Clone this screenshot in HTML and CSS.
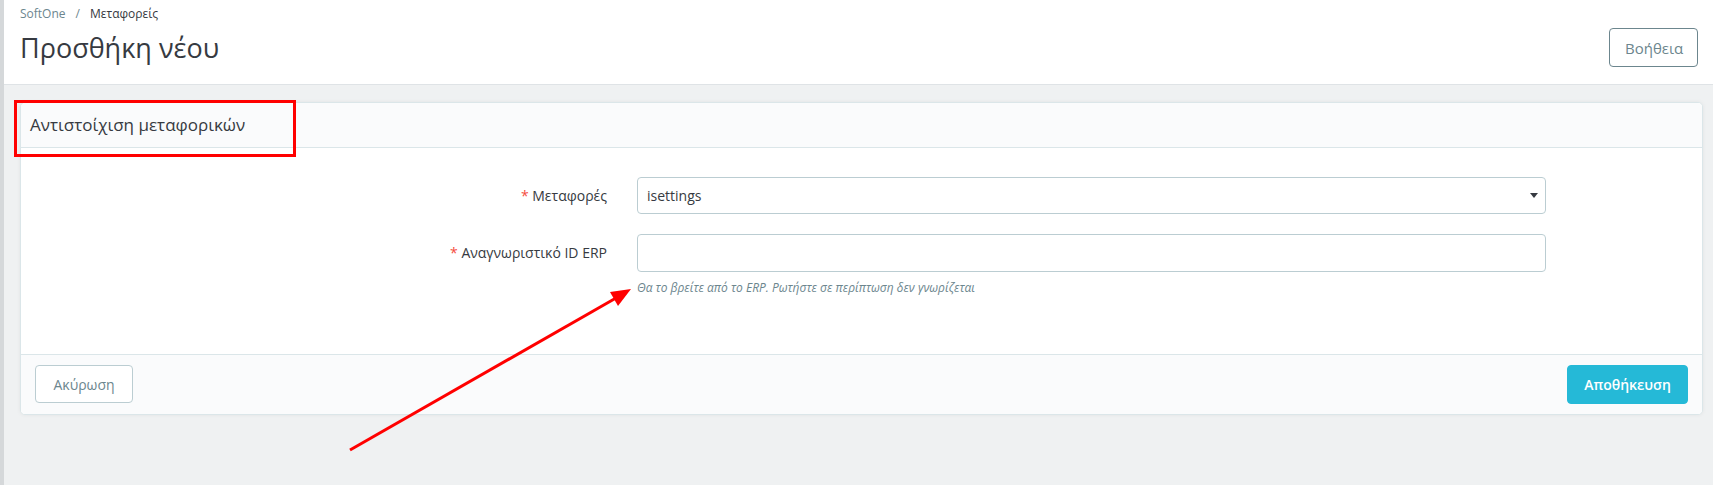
FILE: index.html
```html
<!DOCTYPE html>
<html lang="el">
<head>
<meta charset="utf-8">
<title>Προσθήκη νέου</title>
<link rel="stylesheet" href="styles.css">
</head>
<body>
<div class="layout">
  <div class="side-strip"></div>
  <div class="main">
    <header class="page-head">
      <div class="head-left">
        <nav class="crumbs"><span class="crumb-root">SoftOne</span><span class="crumb-sep">/</span><span class="crumb-cur">Μεταφορείς</span></nav>
        <h1 class="page-title">Προσθήκη νέου</h1>
      </div>
      <button class="btn btn-outline">Βοήθεια</button>
    </header>
    <div class="content">
      <div class="card">
        <div class="card-header">Αντιστοίχιση μεταφορικών</div>
        <div class="card-body">
          <div class="form-row">
            <label class="form-label"><span class="req">*</span> Μεταφορές</label>
            <div class="field">
              <div class="select">isettings<span class="caret"></span></div>
            </div>
          </div>
          <div class="form-row">
            <label class="form-label"><span class="req">*</span> Αναγνωριστικό ID ERP</label>
            <div class="field">
              <div class="input"></div>
              <div class="help">Θα το βρείτε από το ERP. Ρωτήστε σε περίπτωση δεν γνωρίζεται</div>
            </div>
          </div>
        </div>
        <div class="card-footer">
          <button class="btn btn-outline-light">Ακύρωση</button>
          <button class="btn btn-primary">Αποθήκευση</button>
        </div>
      </div>
    </div>
  </div>
</div>
<div class="annot-box"></div>
<svg class="annot-arrow" width="1713" height="485" viewBox="0 0 1713 485">
  <line x1="350" y1="450" x2="616" y2="298" stroke="#ff0000" stroke-width="3"/>
  <polygon points="631,289 610,292 618,306" fill="#ff0000"/>
</svg>
</body>
</html>
```
FILE: styles.css
```css
* { box-sizing: border-box; }
html, body { margin: 0; padding: 0; }
body {
  font-family: "Open Sans", "Noto Sans", sans-serif;
  color: #363a41;
  background: #eff1f2;
  width: 1713px;
  height: 485px;
  overflow: hidden;
  position: relative;
}
.layout { display: flex; height: 485px; }
.side-strip { width: 4px; background: #d5d8da; }
.main { flex: 1; display: flex; flex-direction: column; }

.page-head {
  background: #fff;
  height: 85px;
  border-bottom: 1px solid #dfe3e6;
  display: flex;
  justify-content: space-between;
  align-items: flex-start;
  padding: 0 15px 0 16px;
}
.crumbs { font-size: 12px; line-height: 16px; padding-top: 6px; color: #6c868e; }
.crumb-root { color: #6c868e; }
.crumb-sep { margin: 0 10px; color: #6c868e; }
.crumb-cur { color: #363a41; }
.page-title {
  margin: 9px 0 0;
  font-size: 27px;
  font-weight: 400;
  line-height: 34px;
  color: #363a41;
}
.btn {
  font-family: "Open Sans", "Noto Sans", sans-serif;
  font-size: 14px;
  border-radius: 4px;
  cursor: pointer;
  padding: 0 15px;
  height: 39px;
}
.page-head .btn-outline {
  margin-top: 28px;
  width: 89px;
  background: #fff;
  border: 1px solid #6c868e;
  color: #6c868e;
  font-size: 15px;
}
.content { padding: 17px 10px 0 16px; }
.card {
  background: #fff;
  border: 1px solid #dbe6e9;
  border-radius: 5px;
  box-shadow: 0 0 4px 0 rgba(0,0,0,0.06);
  overflow: hidden;
}
.card-header {
  background: #fafbfc;
  height: 45px;
  border-bottom: 1px solid #dbe6e9;
  padding: 0 9px;
  font-size: 17px;
  font-weight: 400;
  line-height: 43px;
  color: #363a41;
}
.card-body { height: 206px; padding-top: 29px; }
.form-row {
  display: grid;
  grid-template-columns: 586px 909px;
  column-gap: 30px;
  margin-bottom: 20px;
}
.form-label {
  text-align: right;
  font-size: 14px;
  line-height: 37px;
  color: #363a41;
}
.req { color: #f54c3e; }
.select, .input {
  height: 37px;
  border: 1px solid #bbcdd2;
  border-radius: 4px;
  background: #fff;
}
.input { height: 38px; }
.select {
  position: relative;
  font-size: 14px;
  line-height: 35px;
  padding-left: 9px;
  color: #363a41;
}
.caret {
  position: absolute;
  right: 7px;
  top: 15px;
  width: 0; height: 0;
  border-left: 4px solid transparent;
  border-right: 4px solid transparent;
  border-top: 5px solid #363a41;
}
.help {
  margin-top: 8px;
  font-size: 12px;
  font-style: italic;
  color: #6c868e;
  line-height: 16px;
}
.card-footer {
  background: #fafbfc;
  border-top: 1px solid #dbe6e9;
  height: 60px;
  padding: 10px 14px 0 14px;
  display: flex;
  justify-content: space-between;
  align-items: flex-start;
}
.btn-outline-light {
  width: 98px;
  height: 38px;
  background: #fff;
  border: 1px solid #bbcdd2;
  color: #6c868e;
}
.btn-primary {
  width: 121px;
  height: 39px;
  background: #25b9d7;
  border: 1px solid #25b9d7;
  color: #fff;
  font-weight: 600;
}
.annot-box {
  position: absolute;
  left: 14px;
  top: 100px;
  width: 282px;
  height: 57px;
  border: 3px solid #ff0000;
}
.annot-arrow { position: absolute; left: 0; top: 0; pointer-events: none; }
```
